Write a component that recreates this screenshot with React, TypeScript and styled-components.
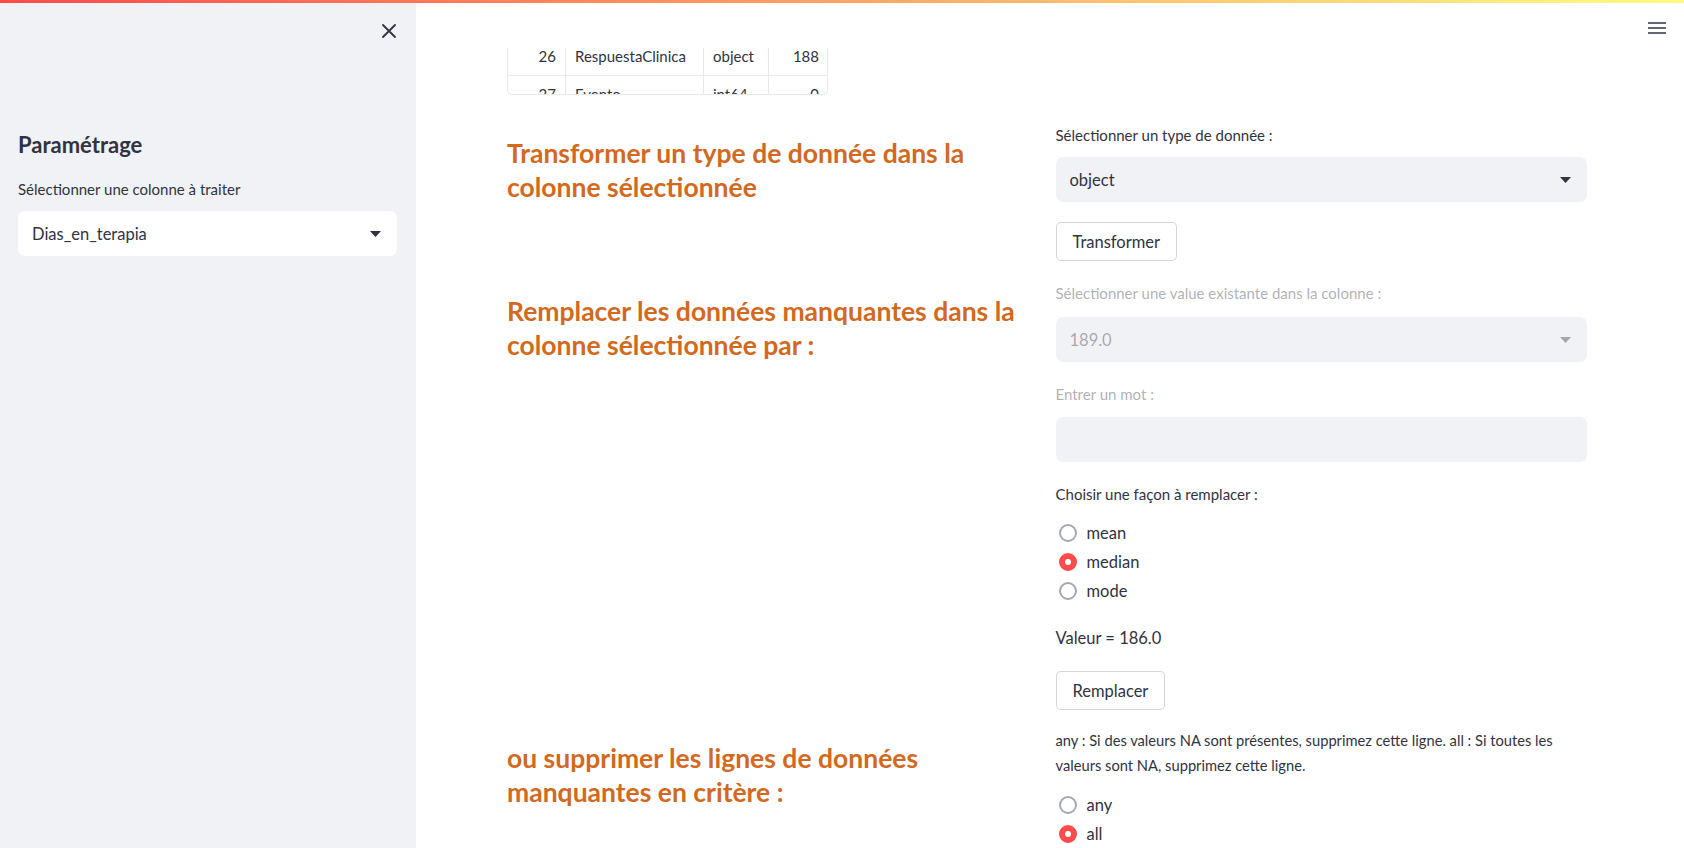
import React from "react";
import styled, { createGlobalStyle } from "styled-components";

const GlobalStyle = createGlobalStyle`
  html, body {
    margin: 0;
    padding: 0;
    height: 100%;
  }
  body {
    font-family: Lato, "Noto Sans", sans-serif;
    color: #31333f;
    background: #ffffff;
    overflow: hidden;
  }
  * {
    box-sizing: border-box;
  }
`;

const Page = styled.div`
  display: flex;
  flex-direction: column;
  height: 100vh;
`;

const Decoration = styled.div`
  height: 3px;
  flex-shrink: 0;
  background: linear-gradient(90deg, #ff4b4b, #fffd80);
`;

const Body = styled.div`
  flex: 1;
  display: flex;
  min-height: 0;
`;

const Sidebar = styled.aside`
  width: 416px;
  flex-shrink: 0;
  background: #f0f2f6;
  padding: 0 19px 0 18px;
  display: flex;
  flex-direction: column;
`;

const CloseRow = styled.div`
  height: 56px;
  display: flex;
  justify-content: flex-end;
  align-items: center;
  padding-right: 1px;
`;

const IconButton = styled.button`
  border: none;
  background: transparent;
  padding: 0;
  display: flex;
  align-items: center;
  justify-content: center;
  color: #31333f;
  cursor: pointer;
`;

const SidebarTitle = styled.h2`
  margin: 72px 0 0;
  font-size: 22px;
  font-weight: 700;
  line-height: 28px;
  color: #31333f;
`;

const SidebarField = styled.div`
  margin-top: 20px;
  display: flex;
  flex-direction: column;
`;

const Main = styled.main`
  flex: 1;
  display: flex;
  flex-direction: column;
  min-width: 0;
`;

const Header = styled.header`
  height: 45px;
  flex-shrink: 0;
  display: flex;
  justify-content: flex-end;
  align-items: flex-start;
  padding: 18px 18px 0 0;
`;

const Content = styled.div`
  width: 1080px;
  margin-left: 91px;
  display: flex;
  flex-direction: column;
`;

// the dataframe is scrolled: only the end of row 26 and the top of row 27 show
const TableClip = styled.div`
  width: 321px;
  height: 47px;
  overflow: hidden;
  border: 1px solid #e6e9ef;
  border-top: none;
  border-radius: 0 0 5px 5px;
`;

const TableBody = styled.div`
  margin-top: -10px;
`;

const TableRow = styled.div`
  display: grid;
  grid-template-columns: 58px 138px 65px 59px;
  height: 38px;
  border-bottom: 1px solid #e6e9ef;
`;

const Cell = styled.div<{ $num?: boolean; $last?: boolean }>`
  display: flex;
  align-items: center;
  justify-content: ${(p) => (p.$num ? "flex-end" : "flex-start")};
  padding: 0 9px 2px;
  font-size: 15px;
  color: #31333f;
  border-right: ${(p) => (p.$last ? "none" : "1px solid #e6e9ef")};
  white-space: nowrap;
`;

const Sections = styled.div`
  margin-top: 30px;
  display: flex;
  flex-direction: column;
`;

const Section = styled.section<{ $top?: number }>`
  display: grid;
  grid-template-columns: 1fr 1fr;
  column-gap: 17px;
  margin-top: ${(p) => p.$top ?? 0}px;
`;

const Heading = styled.h3<{ $pad?: number }>`
  margin: 0;
  padding-top: ${(p) => p.$pad ?? 11}px;
  font-size: 26.5px;
  font-weight: 700;
  line-height: 34px;
  color: #d2691e;
`;

const Widgets = styled.div`
  display: flex;
  flex-direction: column;
  gap: 20px;
`;

const Field = styled.div<{ $top?: number }>`
  display: flex;
  flex-direction: column;
  margin-top: ${(p) => p.$top ?? 0}px;
`;

const Label = styled.label<{ $disabled?: boolean; $mb?: number }>`
  font-size: 15px;
  line-height: 21px;
  margin-bottom: ${(p) => p.$mb ?? 11}px;
  color: ${(p) => (p.$disabled ? "rgba(49, 51, 63, 0.4)" : "#31333f")};
`;

const SelectBox = styled.div<{ $disabled?: boolean; $light?: boolean }>`
  height: 45px;
  border-radius: 7px;
  background: ${(p) => (p.$light ? "#ffffff" : "#f0f2f6")};
  display: flex;
  align-items: center;
  justify-content: space-between;
  padding: 0 16px 0 14px;
  font-size: 16.5px;
  color: ${(p) => (p.$disabled ? "rgba(49, 51, 63, 0.4)" : "#31333f")};
`;

const TextBox = styled.div`
  height: 45px;
  border-radius: 7px;
  background: #f0f2f6;
`;

const Button = styled.button`
  align-self: flex-start;
  height: 39px;
  padding: 0 16px;
  background: #ffffff;
  border: 1px solid rgba(49, 51, 63, 0.2);
  border-radius: 5px;
  font-family: inherit;
  font-size: 16.5px;
  color: #31333f;
  cursor: pointer;
`;

const RadioGroup = styled.div`
  display: flex;
  flex-direction: column;
`;

const RadioCaption = styled.div<{ $gap?: number; $size?: number }>`
  font-size: ${(p) => p.$size ?? 15}px;
  line-height: 25px;
  margin-bottom: ${(p) => p.$gap ?? 12}px;
  color: #31333f;
`;

const RadioRow = styled.div`
  height: 29px;
  display: flex;
  align-items: center;
  gap: 10px;
  padding-left: 3px;
  font-size: 16.5px;
  color: #31333f;
`;

const RadioDot = styled.span<{ $checked?: boolean }>`
  width: 18px;
  height: 18px;
  border-radius: 50%;
  flex-shrink: 0;
  display: flex;
  align-items: center;
  justify-content: center;
  background: ${(p) => (p.$checked ? "#ff4b4b" : "#ffffff")};
  border: 2px solid ${(p) => (p.$checked ? "#ff4b4b" : "#a3a8b4")};
`;

const InnerDot = styled.span`
  width: 6px;
  height: 6px;
  border-radius: 50%;
  background: #ffffff;
`;

const Text = styled.div`
  font-size: 16.5px;
  line-height: 25px;
  color: #31333f;
  margin-top: 1px;
`;

const Arrow = ({ faded }: { faded?: boolean }) => (
  <svg width="11" height="6" viewBox="0 0 11 6">
    <path d="M0 0 L11 0 L5.5 6 Z" fill={faded ? "rgba(49,51,63,0.4)" : "#31333f"} />
  </svg>
);

const CloseIcon = () => (
  <svg width="14" height="14" viewBox="0 0 14 14">
    <path d="M1 1 L13 13 M13 1 L1 13" stroke="#31333f" strokeWidth="1.8" strokeLinecap="round" />
  </svg>
);

const MenuIcon = () => (
  <svg width="18" height="14" viewBox="0 0 18 14">
    <path d="M0 2 H18 M0 7 H18 M0 12 H18" stroke="#31333f" strokeWidth="1.7" />
  </svg>
);

type RadioProps = { label: string; checked?: boolean };

const Radio = ({ label, checked }: RadioProps) => (
  <RadioRow>
    <RadioDot $checked={checked}>{checked && <InnerDot />}</RadioDot>
    {label}
  </RadioRow>
);

const rows = [
  { idx: "26", name: "RespuestaClinica", type: "object", nulls: "188" },
  { idx: "27", name: "Evento", type: "int64", nulls: "0" },
];

export default function App() {
  return (
    <>
      <GlobalStyle />
      <Page>
        <Decoration />
        <Body>
          <Sidebar>
            <CloseRow>
              <IconButton aria-label="Fermer">
                <CloseIcon />
              </IconButton>
            </CloseRow>
            <SidebarTitle>Paramétrage</SidebarTitle>
            <SidebarField>
              <Label>Sélectionner une colonne à traiter</Label>
              <SelectBox $light>
                Dias_en_terapia
                <Arrow />
              </SelectBox>
            </SidebarField>
          </Sidebar>

          <Main>
            <Header>
              <IconButton aria-label="Menu">
                <MenuIcon />
              </IconButton>
            </Header>
            <Content>
              <TableClip>
                <TableBody>
                  {rows.map((r) => (
                    <TableRow key={r.idx}>
                      <Cell $num>{r.idx}</Cell>
                      <Cell>{r.name}</Cell>
                      <Cell>{r.type}</Cell>
                      <Cell $num $last>
                        {r.nulls}
                      </Cell>
                    </TableRow>
                  ))}
                </TableBody>
              </TableClip>

              <Sections>
                <Section>
                  <Heading>
                    Transformer un type de donnée dans la
                    <br />
                    colonne sélectionnée
                  </Heading>
                  <Widgets>
                    <Field>
                      <Label>Sélectionner un type de donnée :</Label>
                      <SelectBox>
                        object
                        <Arrow />
                      </SelectBox>
                    </Field>
                    <Button>Transformer</Button>
                  </Widgets>
                </Section>

                <Section $top={22}>
                  <Heading>
                    Remplacer les données manquantes dans la
                    <br />
                    colonne sélectionnée par :
                  </Heading>
                  <Widgets>
                    <Field>
                      <Label $disabled $mb={13}>
                        Sélectionner une value existante dans la colonne :
                      </Label>
                      <SelectBox $disabled>
                        189.0
                        <Arrow faded />
                      </SelectBox>
                    </Field>
                    <Field $top={2}>
                      <Label $disabled $mb={12}>
                        Entrer un mot :
                      </Label>
                      <TextBox />
                    </Field>
                    <RadioGroup>
                      <RadioCaption $gap={11}>Choisir une façon à remplacer :</RadioCaption>
                      <Radio label="mean" />
                      <Radio label="median" checked />
                      <Radio label="mode" />
                    </RadioGroup>
                    <Text>Valeur = 186.0</Text>
                    <Button>Remplacer</Button>
                  </Widgets>
                </Section>

                <Section $top={18}>
                  <Heading $pad={13}>
                    ou supprimer les lignes de données
                    <br />
                    manquantes en critère :
                  </Heading>
                  <Widgets>
                    <RadioGroup>
                      <RadioCaption $size={14.7}>
                        any : Si des valeurs NA sont présentes, supprimez cette ligne. all : Si toutes les
                        valeurs sont NA, supprimez cette ligne.
                      </RadioCaption>
                      <Radio label="any" />
                      <Radio label="all" checked />
                    </RadioGroup>
                  </Widgets>
                </Section>
              </Sections>
            </Content>
          </Main>
        </Body>
      </Page>
    </>
  );
}
